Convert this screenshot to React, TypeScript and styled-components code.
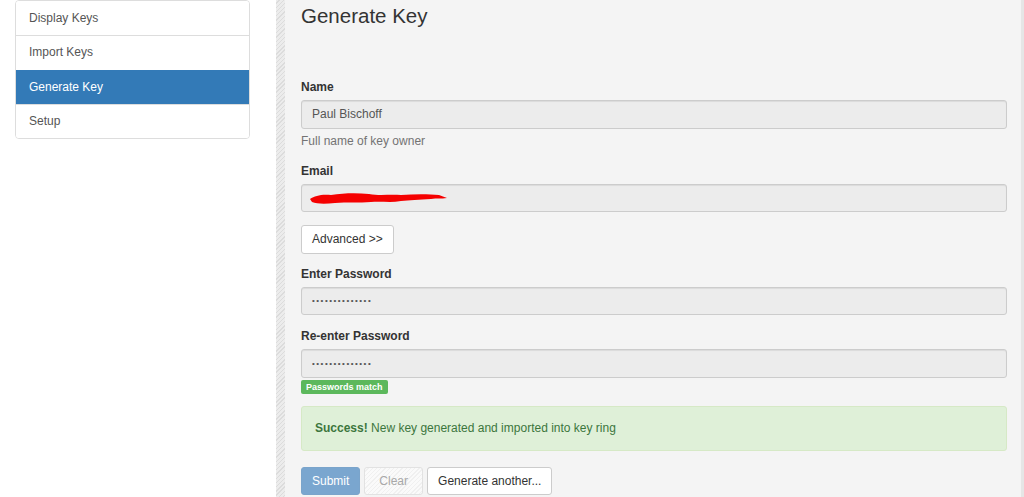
import styled, { createGlobalStyle } from "styled-components";

const GlobalStyle = createGlobalStyle`
  html, body {
    margin: 0;
    padding: 0;
    height: 100%;
    overflow: hidden;
    background: #fff;
    font-family: "Liberation Sans", Arial, sans-serif;
    font-size: 12px;
    line-height: 17px;
    color: #333;
  }
  * { box-sizing: border-box; }
`;

const navItems = ["Display Keys", "Import Keys", "Generate Key", "Setup"];

const App = () => {
  return (
    <Page>
      <GlobalStyle />
      <Sidebar>
        <ListGroup>
          {navItems.map((item) => (
            <ListItem key={item} $active={item === "Generate Key"}>
              {item}
            </ListItem>
          ))}
        </ListGroup>
      </Sidebar>
      <Divider />
      <Main>
        <Title>Generate Key</Title>
        <FormGroup>
          <Label>Name</Label>
          <Input type="text" readOnly value="Paul Bischoff" />
          <HelpText>Full name of key owner</HelpText>
        </FormGroup>
        <FormGroup>
          <Label>Email</Label>
          <InputWrap>
            <Input type="text" readOnly value="" />
            {/* redaction scribble over the address */}
            <Scribble viewBox="0 0 140 16" width="140" height="16">
              <path
                d="M1 9 C 6 6, 12 4, 22 5 C 35 3, 48 3, 60 4 C 72 6, 80 4, 92 5 C 105 4, 120 4, 130 5 L 138 8 C 132 9, 128 8, 122 9 C 110 10, 100 10, 92 11 C 82 13, 72 11, 62 12 C 50 13, 38 12, 26 13 C 16 14, 8 14, 3 12 Z"
                fill="#f50000"
              />
            </Scribble>
          </InputWrap>
        </FormGroup>
        <ButtonRow>
          <Button type="button">Advanced &gt;&gt;</Button>
        </ButtonRow>
        <FormGroup>
          <Label>Enter Password</Label>
          <Input type="password" readOnly value="abcdefghijklmn" />
        </FormGroup>
        <MatchGroup>
          <Label>Re-enter Password</Label>
          <Input type="password" readOnly value="abcdefghijklmn" />
          <Badge>Passwords match</Badge>
        </MatchGroup>
        <Alert>
          <strong>Success!</strong> New key generated and imported into key ring
        </Alert>
        <Actions>
          <Button type="button" $variant="primary">
            Submit
          </Button>
          <Button type="button" $variant="disabled">
            Clear
          </Button>
          <Button type="button">Generate another...</Button>
        </Actions>
      </Main>
      <RightEdge />
    </Page>
  );
};

export default App;

const Page = styled.div`
  display: flex;
  width: 100%;
  height: 100vh;
`;

const Sidebar = styled.div`
  width: 276px;
  flex-shrink: 0;
  padding: 0 26px 0 15px;
  background: #fff;
`;

const ListGroup = styled.div`
  display: flex;
  flex-direction: column;
  border: 1px solid #ddd;
  border-radius: 4px;
  overflow: hidden;
`;

const ListItem = styled.div<{ $active?: boolean }>`
  height: 34.25px;
  display: flex;
  align-items: center;
  padding: 0 13px;
  color: ${(p) => (p.$active ? "#fff" : "#555")};
  background: ${(p) => (p.$active ? "#337ab7" : "#fff")};
  border-top: 1px solid ${(p) => (p.$active ? "#337ab7" : "#ddd")};
  &:first-child {
    border-top: none;
  }
`;

const Divider = styled.div`
  width: 9px;
  flex-shrink: 0;
  background: repeating-linear-gradient(
    135deg,
    #ececec 0px,
    #ececec 2px,
    #dcdcdc 2px,
    #dcdcdc 3px
  );
`;

const Main = styled.div`
  flex: 1;
  background: #f4f4f4;
  padding: 4px 14px 0 16px;
`;

const RightEdge = styled.div`
  width: 3px;
  flex-shrink: 0;
  background: #e6e6e6;
`;

const Title = styled.h3`
  margin: 0 0 52px;
  font-size: 20.5px;
  line-height: 23px;
  font-weight: 400;
  color: #333;
`;

const FormGroup = styled.div`
  margin-bottom: 12.75px;
`;

const MatchGroup = styled.div`
  margin-bottom: 12px;
`;

const Label = styled.label`
  display: block;
  font-weight: 700;
  margin-bottom: 4px;
  color: #333;
`;

const InputWrap = styled.div`
  position: relative;
`;

const Input = styled.input`
  display: block;
  width: 100%;
  height: 28.75px;
  padding: 0 10px;
  font-family: "Liberation Sans", Arial, sans-serif;
  font-size: 12px;
  color: #555;
  background: #ececec;
  border: 1px solid #ccc;
  border-radius: 3px;
  box-shadow: inset 0 1px 1px rgba(0, 0, 0, 0.075);
  outline: none;
  &[type="password"] {
    font-size: 8px;
    letter-spacing: 1.5px;
  }
`;

const Scribble = styled.svg`
  position: absolute;
  left: 8px;
  top: 6px;
`;

const HelpText = styled.div`
  margin-top: 4px;
  color: #737373;
`;

const ButtonRow = styled.div`
  margin-bottom: 12px;
`;

const Button = styled.button<{ $variant?: "primary" | "disabled" }>`
  height: 28.5px;
  padding: 0 ${(p) => (p.$variant === "disabled" ? "14px" : "10px")};
  font-family: "Liberation Sans", Arial, sans-serif;
  font-size: 12px;
  border-radius: 3px;
  border: 1px solid
    ${(p) => (p.$variant === "primary" ? "#7aa4cb" : p.$variant === "disabled" ? "#e2e2e2" : "#ccc")};
  color: ${(p) => (p.$variant === "primary" ? "#fff" : p.$variant === "disabled" ? "#a8a8a8" : "#333")};
  background: ${(p) =>
    p.$variant === "primary"
      ? "#7aa6cf"
      : p.$variant === "disabled"
      ? "repeating-linear-gradient(135deg, #fafafa 0px, #fafafa 2px, #f0f0f0 2px, #f0f0f0 3px)"
      : "#fff"};
`;

const Badge = styled.span`
  display: block;
  width: fit-content;
  margin-top: 2px;
  padding: 0 5px;
  height: 14px;
  line-height: 14px;
  font-size: 9px;
  font-weight: 700;
  color: #fff;
  background: #5cb85c;
  border-radius: 2px;
`;

const Alert = styled.div`
  padding: 13px;
  margin-bottom: 16px;
  background: #dff0d8;
  border: 1px solid #d6e9c6;
  border-radius: 3px;
  color: #3c763d;
  strong {
    font-weight: 700;
  }
`;

const Actions = styled.div`
  display: flex;
  gap: 4px;
`;
